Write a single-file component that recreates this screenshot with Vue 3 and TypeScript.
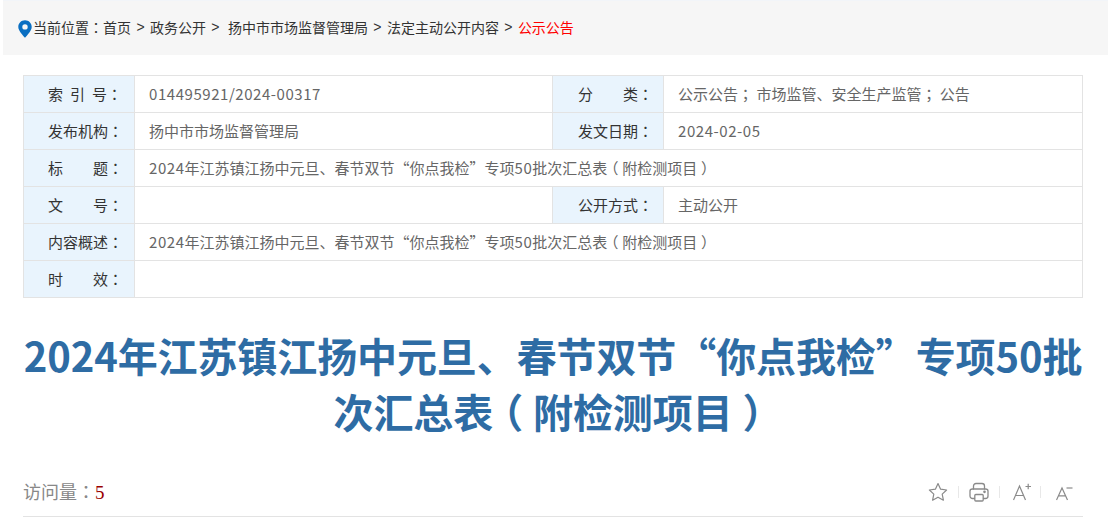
<script setup lang="ts">
const crumbs = [
  { text: '政务公开', gap: false },
  { text: '扬中市市场监督管理局', gap: true },
  { text: '法定主动公开内容', gap: false },
]
</script>

<template>
  <div class="page">
    <nav class="crumbs">
      <svg class="pin" width="14" height="18" viewBox="0 0 14 18">
        <path fill-rule="evenodd" fill="#0a6fc2" d="M7 0.3C3.2 0.3 0.3 3.2 0.3 6.9C0.3 10.6 4.6 14.8 7 17.7C9.4 14.8 13.7 10.6 13.7 6.9C13.7 3.2 10.8 0.3 7 0.3ZM7 4.2A2.7 2.7 0 1 1 7 9.6A2.7 2.7 0 1 1 7 4.2Z" />
      </svg>
      <span>当前位置<span class="p">：</span>首页</span>
      <template v-for="c in crumbs" :key="c.text">
        <span class="sep" :class="{ wide: c.gap }">&gt;</span>
        <span>{{ c.text }}</span>
      </template>
      <span class="sep">&gt;</span>
      <span class="current">公示公告</span>
    </nav>

    <div class="meta">
      <div class="lab"><span class="spaced">索 引 号<span class="p">：</span></span></div>
      <div class="val"><span class="num">014495921/2024-00317</span></div>
      <div class="lab r">分<i class="g2"></i>类<span class="p">：</span></div>
      <div class="val end">公示公告<span class="p">；</span> 市场监管、安全生产监管<span class="p">；</span> 公告</div>

      <div class="lab">发布机构<span class="p">：</span></div>
      <div class="val">扬中市市场监督管理局</div>
      <div class="lab r">发文日期<span class="p">：</span></div>
      <div class="val end"><span class="num">2024-02-05</span></div>

      <div class="lab">标<i class="g2"></i>题<span class="p">：</span></div>
      <div class="val wide-val"><span><span class="num">2024</span>年江苏镇江扬中元旦、春节双节“你点我检”专项<span class="num">50</span>批次汇总表<span class="pn">（</span>附检测项目<span class="pn">）</span></span></div>

      <div class="lab">文<i class="g2"></i>号<span class="p">：</span></div>
      <div class="val"></div>
      <div class="lab r">公开方式<span class="p">：</span></div>
      <div class="val end">主动公开</div>

      <div class="lab">内容概述<span class="p">：</span></div>
      <div class="val wide-val"><span><span class="num">2024</span>年江苏镇江扬中元旦、春节双节“你点我检”专项<span class="num">50</span>批次汇总表<span class="pn">（</span>附检测项目<span class="pn">）</span></span></div>

      <div class="lab">时<i class="g2"></i>效<span class="p">：</span></div>
      <div class="val wide-val"></div>
    </div>

    <h1 class="title">2024年江苏镇江扬中元旦、春节双节“你点我检”专项50批次汇总表<span class="pn">（</span>附检测项目<span class="pn">）</span></h1>

    <div class="foot">
      <div class="visits">访问量<span class="p">：</span><span class="count">5</span></div>
      <div class="tools">
        <div class="tool">
          <svg width="20" height="20" viewBox="0 0 20 20" fill="none" stroke="#8a8a8a" stroke-width="1.2" stroke-linejoin="round">
            <path d="M10 1.6L12.6 7.2L18.6 8L14.2 12.1L15.4 18.2L10 15.2L4.6 18.2L5.8 12.1L1.4 8L7.4 7.2Z" />
          </svg>
        </div>
        <i class="bar"></i>
        <div class="tool">
          <svg width="20" height="20" viewBox="0 0 20 20" fill="none" stroke="#8a8a8a" stroke-width="1.3" stroke-linejoin="round" stroke-linecap="round">
            <path d="M4.5 7V4C4.5 2.6 5.6 1.5 7 1.5H13C14.4 1.5 15.5 2.6 15.5 4V7" />
            <path d="M5.5 16.5H3.5C2.2 16.5 1 15.4 1 14V9C1 7.6 2.2 7 3.5 7H16.5C17.8 7 19 7.6 19 9V14C19 15.4 17.8 16.5 16.5 16.5H14.5" />
            <rect x="5.8" y="12.5" width="8.4" height="6.5" rx="1" />
            <circle cx="15.5" cy="9.8" r="0.7" />
          </svg>
        </div>
        <i class="bar"></i>
        <div class="tool shift-plus">
          <svg width="18" height="20" viewBox="0 0 18 20" fill="none" stroke="#8a8a8a" stroke-width="1.2">
            <path d="M0.5 18L6.5 4L12.5 18M2.6 13.5H10.4" />
            <path d="M12.5 4.5H18M15.2 1.8V7.2" />
          </svg>
        </div>
        <i class="bar"></i>
        <div class="tool shift-minus">
          <svg width="17" height="20" viewBox="0 0 17 20" fill="none" stroke="#8a8a8a" stroke-width="1.2">
            <path d="M0.5 18L6 6L11.5 18M2.4 13.8H9.6" />
            <path d="M10.5 6H16.5" />
          </svg>
        </div>
      </div>
    </div>
  </div>
</template>

<style>
html, body { margin: 0; background: #fff; }
</style>

<style scoped>
.page {
  width: 1108px;
  height: 530px;
  overflow: hidden;
  font-family: "Noto Sans CJK SC", "Noto Sans", sans-serif;
  color: #333;
}
.p { font-family: "Noto Sans CJK TC", sans-serif; }
.pn {
  font-feature-settings: "halt";
  padding: 0 0.25em;
}
.crumbs {
  margin-left: 3px;
  height: 55px;
  box-sizing: border-box;
  padding: 0 0 3px 15px;
  background: #f6f6f6;
  border-top: 1px solid #f2f5f9;
  display: flex;
  align-items: center;
  font-size: 14px;
  color: #333;
}
.pin { margin: 5px 1px 0 0; }
.sep { margin: 0 5.4px; font-family: "Liberation Sans", sans-serif; }
.sep.wide { margin-right: 8.4px; }
.current { color: #f00; }
.meta {
  margin: 20px 25px 0 23px;
  display: grid;
  grid-template-columns: 111px 418px 111px 419px;
  grid-auto-rows: 37px;
  border-top: 1px solid #e3e3e3;
  border-left: 1px solid #e3e3e3;
  box-sizing: border-box;
  width: 1060px;
  font-size: 15px;
}
.lab, .val {
  border-right: 1px solid #e3e3e3;
  border-bottom: 1px solid #e3e3e3;
  display: flex;
  align-items: center;
  box-sizing: border-box;
  white-space: pre;
  padding-bottom: 2px;
}
.lab {
  background: #e9f4fd;
  color: #333;
  padding-left: 24px;
}
.lab.r { padding-left: 25px; }
.val {
  padding-left: 14px;
  color: #666;
}
.num { letter-spacing: 0.55px; }
.wide-val { grid-column: 2 / 5; }
.g2 { display: inline-block; width: 30px; }
.spaced { word-spacing: 3.6px; }
.title {
  margin: 29px 24px 0 22px;
  font-size: 40px;
  line-height: 56px;
  font-weight: 700;
  letter-spacing: -0.1px;
  text-align: center;
  color: #2e6ca4;
}
.foot {
  margin: 37px 25px 0 23px;
  height: 41px;
  box-sizing: border-box;
  display: flex;
  justify-content: space-between;
  align-items: flex-start;
  border-bottom: 1px solid #e3e3e3;
}
.visits {
  font-size: 18px;
  line-height: 30px;
  color: #888;
}
.count { color: #900; font-family: "Liberation Serif", serif; font-size: 19px; }
.tools {
  display: flex;
  align-items: center;
  height: 32px;
  margin-right: 2px;
}
.tool {
  width: 40px;
  height: 20px;
  display: flex;
  justify-content: center;
}
.shift-plus { padding-left: 4px; box-sizing: border-box; }
.shift-minus { padding-left: 6px; box-sizing: border-box; }
.bar {
  display: block;
  width: 1px;
  height: 12px;
  background: #e8e8e8;
}
</style>
